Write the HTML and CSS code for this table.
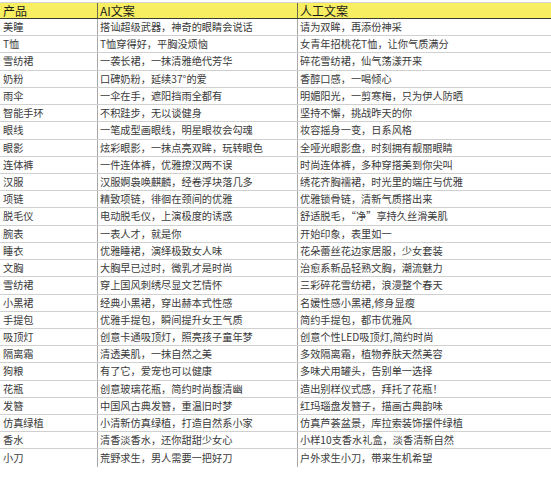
FILE: index.html
```html
<!DOCTYPE html>
<html lang="zh-CN">
<head>
<meta charset="utf-8">
<title>AI文案 vs 人工文案</title>
<link rel="stylesheet" href="styles.css">
</head>
<body>
<div class="sheet">
  <div class="row head"><div class="c c1">产品</div><div class="c c2">AI文案</div><div class="c c3">人工文案</div></div>
  <div class="row"><div class="c c1">美瞳</div><div class="c c2">搭讪超级武器，神奇的眼睛会说话</div><div class="c c3">请为双眸，再添份神采</div></div>
  <div class="row"><div class="c c1">T恤</div><div class="c c2">T恤穿得好，平胸没烦恼</div><div class="c c3">女青年招桃花T恤，让你气质满分</div></div>
  <div class="row"><div class="c c1">雪纺裙</div><div class="c c2">一袭长裙，一抹清雅绝代芳华</div><div class="c c3">碎花雪纺裙，仙气荡漾开来</div></div>
  <div class="row"><div class="c c1">奶粉</div><div class="c c2">口碑奶粉，延续37°的爱</div><div class="c c3">香醇口感，一喝倾心</div></div>
  <div class="row"><div class="c c1">雨伞</div><div class="c c2">一伞在手，遮阳挡雨全都有</div><div class="c c3">明媚阳光，一剪寒梅，只为伊人防晒</div></div>
  <div class="row"><div class="c c1">智能手环</div><div class="c c2">不积跬步，无以谈健身</div><div class="c c3">坚持不懈，挑战昨天的你</div></div>
  <div class="row"><div class="c c1">眼线</div><div class="c c2">一笔成型画眼线，明星眼妆会勾魂</div><div class="c c3">妆容摇身一变，日系风格</div></div>
  <div class="row"><div class="c c1">眼影</div><div class="c c2">炫彩眼影，一抹点亮双眸，玩转眼色</div><div class="c c3">全哑光眼影盘，时刻拥有靓丽眼睛</div></div>
  <div class="row"><div class="c c1">连体裤</div><div class="c c2">一件连体裤，优雅撩汉两不误</div><div class="c c3">时尚连体裤，多种穿搭美到你尖叫</div></div>
  <div class="row"><div class="c c1">汉服</div><div class="c c2">汉服婀袅唤麒麟，经卷浮块落几多</div><div class="c c3">绣花齐胸襦裙，时光里的端庄与优雅</div></div>
  <div class="row"><div class="c c1">项链</div><div class="c c2">精致项链，徘徊在颈间的优雅</div><div class="c c3">优雅锁骨链，清新气质搭出来</div></div>
  <div class="row"><div class="c c1">脱毛仪</div><div class="c c2">电动脱毛仪，上演极度的诱惑</div><div class="c c3">舒适脱毛，“净”享持久丝滑美肌</div></div>
  <div class="row"><div class="c c1">腕表</div><div class="c c2">一表人才，就是你</div><div class="c c3">开始印象，表里如一</div></div>
  <div class="row"><div class="c c1">睡衣</div><div class="c c2">优雅睡裙，演绎极致女人味</div><div class="c c3">花朵蕾丝花边家居服，少女套装</div></div>
  <div class="row"><div class="c c1">文胸</div><div class="c c2">大胸早已过时，微乳才是时尚</div><div class="c c3">治愈系新品轻熟文胸，潮流魅力</div></div>
  <div class="row"><div class="c c1">雪纺裙</div><div class="c c2">穿上国风刺绣尽显文艺情怀</div><div class="c c3">三彩碎花雪纺裙，浪漫整个春天</div></div>
  <div class="row"><div class="c c1">小黑裙</div><div class="c c2">经典小黑裙，穿出赫本式性感</div><div class="c c3">名媛性感小黑裙,修身显瘦</div></div>
  <div class="row"><div class="c c1">手提包</div><div class="c c2">优雅手提包，瞬间提升女王气质</div><div class="c c3">简约手提包，都市优雅风</div></div>
  <div class="row"><div class="c c1">吸顶灯</div><div class="c c2">创意卡通吸顶灯，照亮孩子童年梦</div><div class="c c3">创意个性LED吸顶灯,简约时尚</div></div>
  <div class="row"><div class="c c1">隔离霜</div><div class="c c2">清透美肌，一抹自然之美</div><div class="c c3">多效隔离霜，植物养肤天然美容</div></div>
  <div class="row"><div class="c c1">狗粮</div><div class="c c2">有了它，爱宠也可以健康</div><div class="c c3">多味犬用罐头，告别单一选择</div></div>
  <div class="row"><div class="c c1">花瓶</div><div class="c c2">创意玻璃花瓶，简约时尚馥清幽</div><div class="c c3">造出别样仪式感，拜托了花瓶！</div></div>
  <div class="row"><div class="c c1">发簪</div><div class="c c2">中国风古典发簪，重温旧时梦</div><div class="c c3">红玛瑙盘发簪子，描画古典韵味</div></div>
  <div class="row"><div class="c c1">仿真绿植</div><div class="c c2">小清新仿真绿植，打造自然系小家</div><div class="c c3">仿真芦荟盆景，库拉索装饰摆件绿植</div></div>
  <div class="row"><div class="c c1">香水</div><div class="c c2">清香淡香水，还你甜甜少女心</div><div class="c c3">小样10支香水礼盒，淡香清新自然</div></div>
  <div class="row last"><div class="c c1">小刀</div><div class="c c2">荒野求生，男人需要一把好刀</div><div class="c c3">户外求生小刀，带来生机希望</div></div>
</div>
</body>
</html>
```

FILE: styles.css
```css
html, body {
  margin: 0;
  padding: 0;
  background: #ffffff;
}

body {
  font-family: "Noto Sans CJK SC", "Noto Sans", sans-serif;
  font-size: 10.2px;
  color: #3a3a3a;
  overflow: hidden;
}

.sheet {
  margin-top: 2px;
  border-top: 1px solid #d4d4d4;
  width: 551px;
}

.row {
  display: grid;
  grid-template-columns: 97px 200px 1fr;
  height: 17.23px;
  box-sizing: border-box;
  border-bottom: 1px solid #d0d0d0;
}

.row.last {
  border-bottom: none;
}

.c {
  display: flex;
  align-items: center;
  white-space: nowrap;
  overflow: hidden;
  line-height: 1;
}

.c1 {
  padding-left: 3px;
}

.c2,
.c3 {
  border-left: 1px solid #a8a8a8;
  padding-left: 2px;
}

.head {
  height: 16px;
  background: #f7ee62;
  border-bottom: 1px solid #3c3c2c;
  color: #1a1a1a;
  font-size: 12px;
}

.head .c {
  align-items: flex-end;
  line-height: 14px;
}

.head .c2,
.head .c3 {
  border-left: 1px solid #6a6a50;
}
```
